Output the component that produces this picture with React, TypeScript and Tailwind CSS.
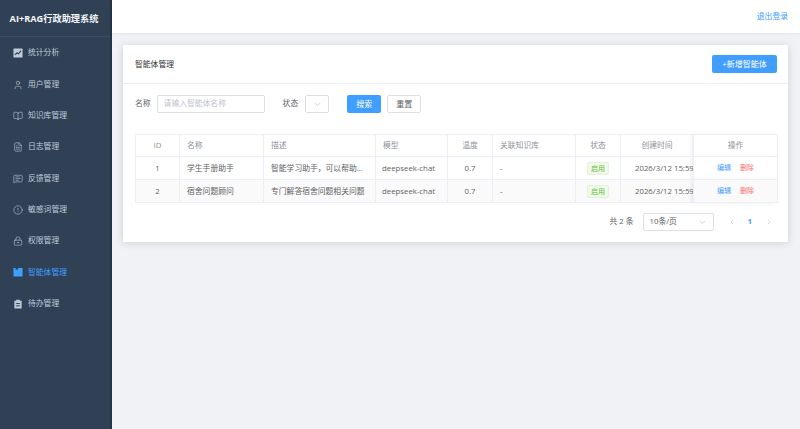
import React from 'react';
import { ChevronDown, ChevronLeft, ChevronRight, User, BookOpen, FileText, MessageSquareText, CircleAlert, LockKeyhole } from 'lucide-react';

const ChartIcon = () => (
  <svg width="10" height="10" viewBox="0 0 11 11">
    <rect x="0.5" y="0.5" width="10" height="10" rx="1" fill="#bfcbd9" />
    <path d="M2 7.5 L4.5 5.2 L6 6.4 L9 3" fill="none" stroke="#304156" strokeWidth="1.2" />
  </svg>
);

const AgentIcon = () => (
  <svg width="10" height="10" viewBox="0 0 11 11">
    <path d="M0.5 1 H3 V3.5 L4.2 2.6 L5.4 3.5 V1 H10.5 V10.5 H0.5 Z" fill="#409eff" />
  </svg>
);

const TodoIcon = () => (
  <svg width="10" height="10" viewBox="0 0 11 11">
    <path d="M1.5 2 H3.5 V0.8 H7.5 V2 H9.5 V10.5 H1.5 Z" fill="#bfcbd9" />
    <path d="M3.2 5 H7.8 M3.2 7.5 H7.8" stroke="#304156" strokeWidth="1" />
  </svg>
);

const menu = [
  { label: '统计分析', icon: <ChartIcon /> },
  { label: '用户管理', icon: <User size={10} strokeWidth={1.4} /> },
  { label: '知识库管理', icon: <BookOpen size={10} strokeWidth={1.4} /> },
  { label: '日志管理', icon: <FileText size={10} strokeWidth={1.4} /> },
  { label: '反馈管理', icon: <MessageSquareText size={10} strokeWidth={1.4} /> },
  { label: '敏感词管理', icon: <CircleAlert size={10} strokeWidth={1.4} /> },
  { label: '权限管理', icon: <LockKeyhole size={10} strokeWidth={1.4} /> },
  { label: '智能体管理', icon: <AgentIcon />, active: true },
  { label: '待办管理', icon: <TodoIcon /> },
];

const columns = [
  { title: 'ID', width: 'w-[44px]', align: 'text-center' },
  { title: '名称', width: 'w-[84px]', align: 'text-left' },
  { title: '描述', width: 'w-[112px]', align: 'text-left' },
  { title: '模型', width: 'w-[72px]', align: 'text-left' },
  { title: '温度', width: 'w-[45px]', align: 'text-center' },
  { title: '关联知识库', width: 'w-[83px]', align: 'text-left' },
  { title: '状态', width: 'w-[45px]', align: 'text-center' },
  { title: '创建时间', width: 'w-[73px]', align: 'text-center' },
  { title: '操作', width: 'w-[84px]', align: 'text-center' },
];

const rows = [
  { id: 1, name: '学生手册助手', desc: '智能学习助手，可以帮助...' },
  { id: 2, name: '宿舍问题顾问', desc: '专门解答宿舍问题相关问题' },
];

const App: React.FC = () => {
  return (
    <div className="flex h-[429px] w-[800px] overflow-hidden bg-[#f0f2f5] font-['Open_Sans','Noto_Sans_CJK_SC',sans-serif] text-[7.8px] text-[#606266]">
      {/* Sidebar */}
      <aside className="w-[112px] shrink-0 border-r-2 border-[#263445] bg-[#304156]">
        <div className="flex h-[37px] items-center justify-center border-b border-[#3b4c63] pt-px pr-[2px] text-[9.2px] font-bold whitespace-nowrap text-[#f2f4f7]">
          AI+RAG行政助理系统
        </div>
        <nav className="flex flex-col pt-[0.7px]">
          {menu.map((item) => (
            <div
              key={item.label}
              className={`flex h-[31.3px] items-center gap-[5px] pl-[13px] ${item.active ? 'text-[#409eff]' : 'text-[#bfcbd9]'}`}
            >
              <span className="flex w-[10px] justify-center">{item.icon}</span>
              <span>{item.label}</span>
            </div>
          ))}
        </nav>
      </aside>

      <div className="flex min-w-0 flex-1 flex-col">
        {/* Header */}
        <header className="flex h-[33px] items-center justify-end bg-white pr-[12px] text-[#409eff] shadow-[0_1px_3px_rgba(0,0,0,0.06)]">
          退出登录
        </header>

        <main className="pt-[12px] pr-[12px] pl-[11px]">
          <div className="h-[197px] bg-white shadow-[0_1px_8px_rgba(0,0,0,0.14)]">
            {/* Card head */}
            <div className="flex h-[39px] items-center justify-between border-b border-[#ebeef5] pr-[11px] pl-[12px]">
              <span className="pt-px text-[#303133]">智能体管理</span>
              <button className="h-[18px] w-[65px] rounded-[2px] bg-[#409eff] text-[8px] text-white">+新增智能体</button>
            </div>

            <div className="px-[12px] pt-[11px]">
              {/* Filters */}
              <div className="flex h-[18px] items-center">
                <span className="mr-[6px] text-[#606266]">名称</span>
                <div className="flex h-[18px] w-[108px] items-center rounded-[2px] border border-[#dcdfe6] pl-[6px] text-[#c0c4cc]">
                  请输入智能体名称
                </div>
                <span className="mr-[7px] ml-[18px]">状态</span>
                <div className="flex h-[18px] w-[24px] items-center justify-center rounded-[2px] border border-[#dcdfe6] text-[#c0c4cc]">
                  <ChevronDown size={9} />
                </div>
                <button className="ml-[18px] h-[18px] w-[34px] rounded-[2px] bg-[#409eff] text-[8px] text-white">搜索</button>
                <button className="ml-[6px] h-[18px] w-[34px] rounded-[2px] border border-[#dcdfe6] text-[8px] text-[#606266]">重置</button>
              </div>

              {/* Table */}
              <table className="mt-[21px] w-[642px] table-fixed border-collapse border border-[#ebeef5]">
                <thead>
                  <tr className="h-[22px]">
                    {columns.map((col, i) => (
                      <th
                        key={col.title}
                        className={`${col.width} ${col.align} border border-[#ebeef5] px-[7px] pt-px font-normal text-[#909399] ${i === 8 ? 'shadow-[-3px_0_4px_rgba(0,0,0,0.07)]' : ''}`}
                      >
                        {col.title}
                      </th>
                    ))}
                  </tr>
                </thead>
                <tbody>
                  {rows.map((row, i) => (
                    <tr key={row.id} className={`h-[23px] ${i === 1 ? 'bg-[#fafafa]' : 'bg-white'}`}>
                      <td className="border border-[#ebeef5] pt-px text-center">{row.id}</td>
                      <td className="border border-[#ebeef5] px-[7px] pt-px whitespace-nowrap">{row.name}</td>
                      <td className="border border-[#ebeef5] px-[7px] pt-px whitespace-nowrap">{row.desc}</td>
                      <td className="border border-[#ebeef5] px-[6px] pt-px whitespace-nowrap">deepseek-chat</td>
                      <td className="border border-[#ebeef5] pt-px text-center">0.7</td>
                      <td className="border border-[#ebeef5] px-[7px] pt-px">-</td>
                      <td className="border border-[#ebeef5] pt-px text-center">
                        <span className="inline-block h-[13px] w-[22px] rounded-[2px] border border-[#e1f3d8] bg-[#f0f9eb] text-[7px] leading-[11px] text-[#67c23a]">
                          启用
                        </span>
                      </td>
                      <td className="overflow-hidden border border-[#ebeef5] pt-px pl-[14px] whitespace-nowrap">2026/3/12 15:59:08</td>
                      <td className={`border border-[#ebeef5] pt-px text-center text-[7px] shadow-[-3px_0_4px_rgba(0,0,0,0.07)] ${i === 1 ? 'bg-[#fafafa]' : 'bg-white'}`}>
                        <span className="text-[#409eff]">编辑</span>
                        <span className="ml-[9px] text-[#f56c6c]">删除</span>
                      </td>
                    </tr>
                  ))}
                </tbody>
              </table>

              {/* Pagination */}
              <div className="mt-[10px] flex h-[18px] items-center justify-end">
                <span>共 2 条</span>
                <div className="ml-[9px] flex h-[18px] w-[71px] items-center justify-between rounded-[2px] border border-[#dcdfe6] px-[6px]">
                  <span>10条/页</span>
                  <ChevronDown size={9} className="text-[#c0c4cc]" />
                </div>
                <ChevronLeft size={8} className="ml-[14px] text-[#c0c4cc]" />
                <span className="ml-[12px] font-bold text-[#409eff]">1</span>
                <ChevronRight size={8} className="mr-[3px] ml-[13px] text-[#c0c4cc]" />
              </div>
            </div>
          </div>
        </main>
      </div>
    </div>
  );
};

export default App;
